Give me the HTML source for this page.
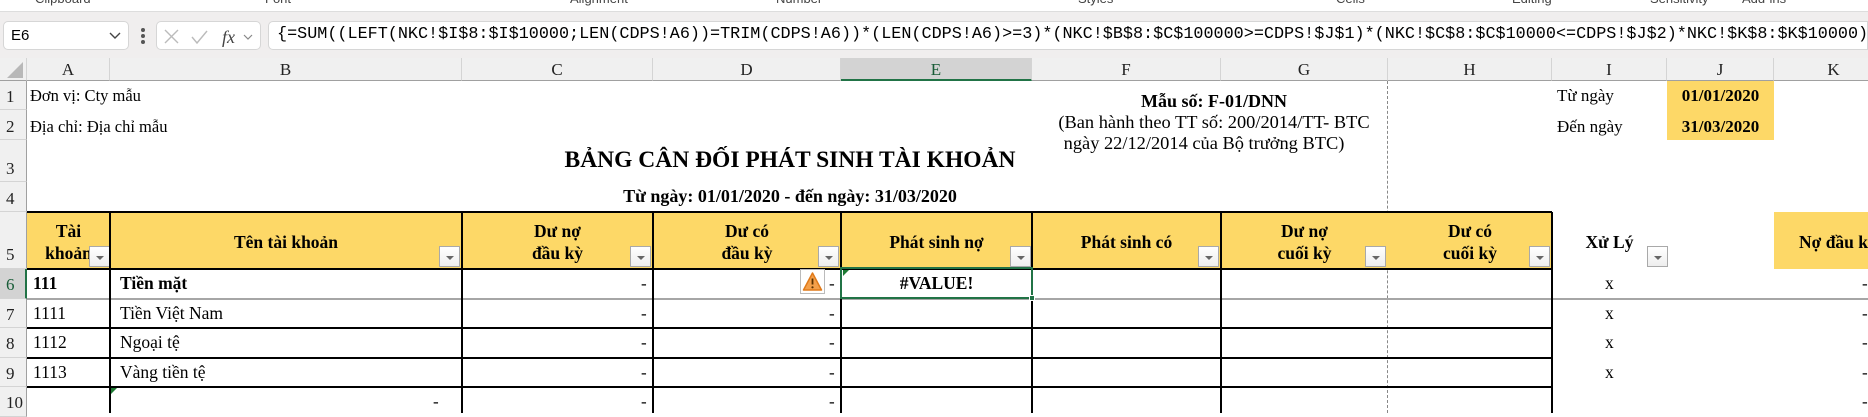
<!DOCTYPE html>
<html><head><meta charset="utf-8"><style>
*{margin:0;padding:0;box-sizing:border-box}
body{width:1868px;height:413px;overflow:hidden;background:#fff;position:relative;font-family:"Liberation Serif",serif;font-size:16px;color:#000}
.a{position:absolute}
.rib{position:absolute;top:-9px;font-family:"Liberation Sans",sans-serif;font-size:13px;color:#444}
.ch{position:absolute;top:58px;height:23px;background:#f0f0f0;border-right:1px solid #d4d4d4;border-bottom:1px solid #a0a0a0;text-align:center;font-size:17px;line-height:23px;color:#222}
.rh{position:absolute;left:0;width:27px;background:#f0f0f0;border-bottom:1px solid #d4d4d4;border-right:1px solid #a0a0a0;font-size:17px;color:#222;text-align:left;padding-left:6px}
.t{position:absolute;white-space:nowrap}
.r{font-size:17.5px}
.hd{position:absolute;top:212px;height:57px;background:#fdd867;font-weight:bold;font-size:17.5px;text-align:center;display:flex;align-items:center;justify-content:center;line-height:22px;padding-top:2px;white-space:nowrap;overflow:hidden}
.fb{position:absolute;width:21px;height:21px;border:1px solid #a9a9a9;background:linear-gradient(#fff,#eee)}
.fb:after{content:"";position:absolute;left:6px;top:9px;border-left:4px solid transparent;border-right:4px solid transparent;border-top:4px solid #666}
.vl{position:absolute;width:2px;background:#000;top:212px;height:201px}
.hl{position:absolute;height:2px;background:#000;left:27px;width:1525px}
.d{position:absolute;font-size:17px}
</style></head><body>
<div class="a" style="left:0;top:0;width:1868px;height:12px;background:#fff;border-bottom:1px solid #ddd"></div>
<div class="rib" style="left:35px">Clipboard</div>
<div class="rib" style="left:265px">Font</div>
<div class="rib" style="left:570px">Alignment</div>
<div class="rib" style="left:776px">Number</div>
<div class="rib" style="left:1078px">Styles</div>
<div class="rib" style="left:1336px">Cells</div>
<div class="rib" style="left:1512px">Editing</div>
<div class="rib" style="left:1650px">Sensitivity</div>
<div class="rib" style="left:1742px">Add-ins</div>
<div class="a" style="left:0;top:12px;width:1868px;height:46px;background:#f0eeee"></div>
<div class="a" style="left:3px;top:21px;width:126px;height:29px;background:#fff;border:1px solid #d6d6d6;border-radius:5px;font-family:'Liberation Sans',sans-serif;font-size:15px;line-height:27px;padding-left:7px">E6</div>
<svg class="a" style="left:108px;top:30px" width="14" height="10"><path d="M2 3l5 5 5-5" fill="none" stroke="#444" stroke-width="1.4"/></svg>
<div class="a" style="left:141px;top:28px;width:4px;height:4px;background:#555;border-radius:2px;box-shadow:0 6px 0 #555,0 12px 0 #555"></div>
<div class="a" style="left:156px;top:21px;width:105px;height:29px;background:#fff;border:1px solid #d6d6d6;border-radius:5px"></div>
<svg class="a" style="left:160px;top:26px" width="100" height="22"><path d="M5 4l13 13M18 4L5 17" stroke="#bbb" stroke-width="1.4"/><path d="M32 11l5 6 10-12" fill="none" stroke="#bbb" stroke-width="1.4"/><text x="62" y="17" font-family="Liberation Serif" font-style="italic" font-size="18" fill="#444">fx</text><path d="M84 9l4 4 4-4" fill="none" stroke="#888" stroke-width="1.2"/></svg>
<div class="a" style="left:268px;top:21px;width:1600px;height:29px;background:#fff;border:1px solid #d6d6d6;border-radius:5px 0 0 5px"></div>
<div class="t" style="left:277px;top:23px;font-family:'Liberation Mono',monospace;font-size:16.8px;line-height:24px">{=SUM((LEFT(NKC!$I$8:$I$10000;LEN(CDPS!A6))=TRIM(CDPS!A6))*(LEN(CDPS!A6)&gt;=3)*(NKC!$B$8:$C$100000&gt;=CDPS!$J$1)*(NKC!$C$8:$C$10000&lt;=CDPS!$J$2)*NKC!$K$8:$K$10000)}</div>
<div class="ch" style="left:0;width:27px"><svg width="20" height="20" style="position:absolute;left:5px;top:2px"><path d="M18 2v16H2z" fill="#b8b8b8"/></svg></div>
<div class="ch" style="left:27px;width:83px">A</div>
<div class="ch" style="left:110px;width:352px">B</div>
<div class="ch" style="left:462px;width:191px">C</div>
<div class="ch" style="left:653px;width:188px">D</div>
<div class="ch" style="left:841px;width:191px;background:#d3d3d3;border-bottom:2px solid #217346;color:#185c37">E</div>
<div class="ch" style="left:1032px;width:189px">F</div>
<div class="ch" style="left:1221px;width:167px">G</div>
<div class="ch" style="left:1388px;width:164px">H</div>
<div class="ch" style="left:1552px;width:115px">I</div>
<div class="ch" style="left:1667px;width:107px">J</div>
<div class="ch" style="left:1774px;width:120px">K</div>
<div class="rh" style="top:81px;height:29px;padding-top:6px">1</div>
<div class="rh" style="top:110px;height:30px;padding-top:7px">2</div>
<div class="rh" style="top:140px;height:42px;padding-top:19px">3</div>
<div class="rh" style="top:182px;height:30px;padding-top:7px">4</div>
<div class="rh" style="top:212px;height:57px;padding-top:33px">5</div>
<div class="rh" style="top:269px;height:30px;padding-top:6px;background:#d3d3d3;color:#185c37;border-right:2px solid #217346">6</div>
<div class="rh" style="top:299px;height:29px;padding-top:6px">7</div>
<div class="rh" style="top:328px;height:30px;padding-top:6px">8</div>
<div class="rh" style="top:358px;height:29px;padding-top:6px">9</div>
<div class="rh" style="top:387px;height:30px;padding-top:6px">10</div>
<div class="a" style="left:1387px;top:81px;width:0;height:332px;border-left:1px dashed #888"></div>
<div class="t" style="left:30px;top:86px;font-size:16.5px">Đơn vị: Cty mẫu</div>
<div class="t" style="left:30px;top:117px;font-size:16.5px">Địa chỉ: Địa chỉ mẫu</div>
<div class="t" style="left:390px;width:800px;text-align:center;top:147px;font-weight:bold;font-size:23.5px">BẢNG CÂN ĐỐI PHÁT SINH TÀI KHOẢN</div>
<div class="t" style="left:390px;width:800px;text-align:center;top:186px;font-weight:bold;font-size:18px">Từ ngày: 01/01/2020 - đến ngày: 31/03/2020</div>
<div class="t" style="left:1014px;width:400px;text-align:center;top:91px;font-weight:bold;font-size:18px">Mẫu số: F-01/DNN</div>
<div class="t" style="left:1014px;width:400px;text-align:center;top:112px;font-size:18.4px">(Ban hành theo TT số: 200/2014/TT- BTC</div>
<div class="t" style="left:1004px;width:400px;text-align:center;top:133px;font-size:18.4px">ngày 22/12/2014 của Bộ trưởng BTC)</div>
<div class="t" style="left:1557px;top:86px;font-size:17px">Từ ngày</div>
<div class="t" style="left:1557px;top:117px;font-size:17px">Đến ngày</div>
<div class="a" style="left:1667px;top:81px;width:107px;height:59px;background:#fdd867"></div>
<div class="t" style="left:1667px;width:107px;text-align:center;top:86px;font-weight:bold;font-size:17px">01/01/2020</div>
<div class="t" style="left:1667px;width:107px;text-align:center;top:117px;font-weight:bold;font-size:17px">31/03/2020</div>
<div class="hd" style="left:27px;width:83px">Tài<br>khoản</div>
<div class="hd" style="left:110px;width:352px">Tên tài khoản</div>
<div class="hd" style="left:462px;width:191px">Dư nợ<br>đầu kỳ</div>
<div class="hd" style="left:653px;width:188px">Dư có<br>đầu kỳ</div>
<div class="hd" style="left:841px;width:191px">Phát sinh nợ</div>
<div class="hd" style="left:1032px;width:189px">Phát sinh có</div>
<div class="hd" style="left:1221px;width:167px">Dư nợ<br>cuối kỳ</div>
<div class="hd" style="left:1388px;width:164px">Dư có<br>cuối kỳ</div>
<div class="hd" style="left:1552px;width:115px;background:none">Xử Lý</div>
<div class="hd" style="left:1774px;width:94px;justify-content:flex-start;padding-left:25px">Nợ đầu kỳ</div>
<div class="fb" style="left:89px;top:246px"></div>
<div class="fb" style="left:439px;top:246px"></div>
<div class="fb" style="left:630px;top:246px"></div>
<div class="fb" style="left:818px;top:246px"></div>
<div class="fb" style="left:1010px;top:246px"></div>
<div class="fb" style="left:1198px;top:246px"></div>
<div class="fb" style="left:1365px;top:246px"></div>
<div class="fb" style="left:1529px;top:246px"></div>
<div class="fb" style="left:1647px;top:246px"></div>
<div class="hl" style="top:211px"></div>
<div class="hl" style="top:268px"></div>
<div class="a" style="left:27px;top:298px;width:1841px;height:2px;background:#a6a6a6"></div>
<div class="hl" style="top:327px"></div>
<div class="hl" style="top:357px"></div>
<div class="hl" style="top:386px"></div>
<div class="vl" style="left:109px"></div>
<div class="vl" style="left:461px"></div>
<div class="vl" style="left:652px"></div>
<div class="vl" style="left:840px"></div>
<div class="vl" style="left:1031px"></div>
<div class="vl" style="left:1220px"></div>
<div class="vl" style="left:1551px"></div>
<div class="t r" style="left:33px;top:273px;font-weight:bold">111</div>
<div class="t r" style="left:120px;top:273px;font-weight:bold">Tiền mặt</div>
<div class="t r" style="left:33px;top:303px">1111</div>
<div class="t r" style="left:120px;top:303px">Tiền Việt Nam</div>
<div class="t r" style="left:33px;top:332px">1112</div>
<div class="t r" style="left:120px;top:332px">Ngoại tệ</div>
<div class="t r" style="left:33px;top:362px">1113</div>
<div class="t r" style="left:120px;top:362px">Vàng tiền tệ</div>
<div class="d" style="left:641px;top:274px">-</div><div class="d" style="left:829px;top:274px">-</div>
<div class="d" style="left:641px;top:304px">-</div><div class="d" style="left:829px;top:304px">-</div>
<div class="d" style="left:641px;top:333px">-</div><div class="d" style="left:829px;top:333px">-</div>
<div class="d" style="left:641px;top:363px">-</div><div class="d" style="left:829px;top:363px">-</div>
<div class="d" style="left:641px;top:392px">-</div><div class="d" style="left:829px;top:392px">-</div>
<div class="d" style="left:433px;top:392px">-</div>
<div class="d" style="left:1862px;top:274px">-</div><div class="d" style="left:1862px;top:304px">-</div>
<div class="d" style="left:1862px;top:333px">-</div><div class="d" style="left:1862px;top:363px">-</div><div class="d" style="left:1862px;top:392px">-</div>
<div class="t r" style="left:1605px;top:273px">x</div>
<div class="t r" style="left:1605px;top:303px">x</div>
<div class="t r" style="left:1605px;top:332px">x</div>
<div class="t r" style="left:1605px;top:362px">x</div>
<svg class="a" style="left:111px;top:388px" width="6" height="6"><path d="M0 0h6L0 6z" fill="#1e7b34"/></svg>
<div class="a" style="left:800px;top:269px;width:25px;height:25px;border:1px solid #bbb;background:#fff"></div>
<svg class="a" style="left:802px;top:271px" width="21" height="21"><path d="M10.5 2L19.5 19H1.5z" fill="#f4a04a" stroke="#e07a1a" stroke-width="1.5" stroke-linejoin="round"/><path d="M10.5 7.5v6" stroke="#5a3000" stroke-width="1.8"/><circle cx="10.5" cy="16.3" r="1.1" fill="#5a3000"/></svg>
<div class="a" style="left:840px;top:267px;width:193px;height:32px;border:2px solid #217346"></div>
<svg class="a" style="left:843px;top:270px" width="6" height="6"><path d="M0 0h6L0 6z" fill="#1e7b34"/></svg>
<div class="a" style="left:1029px;top:295px;width:6px;height:6px;background:#217346;border:1px solid #fff"></div>
<div class="t r" style="left:841px;width:191px;text-align:center;top:273px;font-weight:bold">#VALUE!</div>
</body></html>
